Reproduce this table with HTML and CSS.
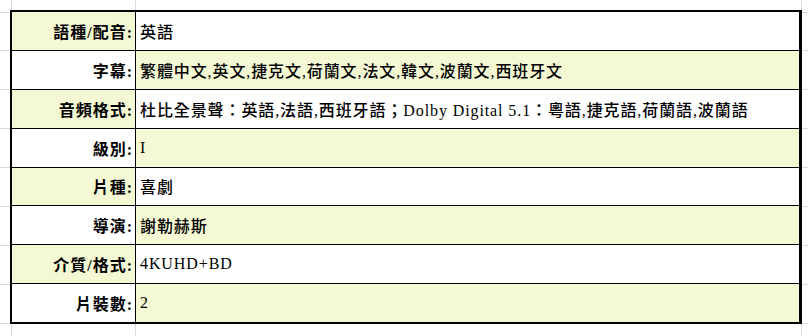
FILE: index.html
```html
<!DOCTYPE html>
<html lang="zh-Hant">
<head>
<meta charset="utf-8">
<title>規格</title>
<link rel="stylesheet" href="styles.css">
</head>
<body>
<div class="sheet">
  <div class="spec">
    <div class="lab hl">語種/配音:</div><div class="val">英語</div>
    <div class="lab">字幕:</div><div class="val hl">繁體中文,英文,捷克文,荷蘭文,法文,韓文,波蘭文,西班牙文</div>
    <div class="lab hl">音頻格式:</div><div class="val">杜比全景聲：英語,法語,西班牙語；Dolby Digital 5.1：粵語,捷克語,荷蘭語,波蘭語</div>
    <div class="lab">級別:</div><div class="val hl">I</div>
    <div class="lab hl">片種:</div><div class="val">喜劇</div>
    <div class="lab">導演:</div><div class="val hl">謝勒赫斯</div>
    <div class="lab hl">介質/格式:</div><div class="val">4KUHD+BD</div>
    <div class="lab">片裝數:</div><div class="val hl">2</div>
  </div>
</div>
</body>
</html>
```
FILE: styles.css
```css
html, body {
  margin: 0;
  padding: 0;
}
body {
  width: 808px;
  height: 336px;
  background-color: #fff;
  background-image:
    linear-gradient(to right, transparent 11px, #dadada 11px, #dadada 12px, transparent 12px),
    linear-gradient(to right, transparent 135px, #dadada 135px, #dadada 136px, transparent 136px),
    linear-gradient(to right, transparent 801px, #dadada 801px, #dadada 802px, transparent 802px),
    linear-gradient(to bottom, transparent 12px, #dadada 12px, #dadada 13px, transparent 13px),
    linear-gradient(to bottom, transparent 50px, #dadada 50px, #dadada 51px, transparent 51px),
    linear-gradient(to bottom, transparent 89px, #dadada 89px, #dadada 90px, transparent 90px),
    linear-gradient(to bottom, transparent 128px, #dadada 128px, #dadada 129px, transparent 129px),
    linear-gradient(to bottom, transparent 167px, #dadada 167px, #dadada 168px, transparent 168px),
    linear-gradient(to bottom, transparent 206px, #dadada 206px, #dadada 207px, transparent 207px),
    linear-gradient(to bottom, transparent 245px, #dadada 245px, #dadada 246px, transparent 246px),
    linear-gradient(to bottom, transparent 284px, #dadada 284px, #dadada 285px, transparent 285px),
    linear-gradient(to bottom, transparent 323px, #dadada 323px, #dadada 324px, transparent 324px);
}
.sheet {
  padding: 10px 6px 0 10px;
}
.spec {
  box-sizing: border-box;
  width: 792px;
  height: 314px;
  display: grid;
  grid-template-columns: 123px 1fr;
  grid-template-rows: repeat(8, 1fr);
  gap: 1px;
  background: #000;
  border: 2px solid #000;
  border-width: 2px 3px 2px 2px;
  font-family: "Liberation Serif", "Noto Sans CJK TC", serif;
  font-size: 16px;
  color: #000;
}
.lab, .val {
  background: #fff;
  display: flex;
  align-items: center;
  white-space: nowrap;
}
.lab {
  justify-content: flex-end;
  padding-right: 2px;
  font-weight: bold;
  letter-spacing: 1px;
}
.val {
  padding-left: 4px;
  font-weight: 500;
  letter-spacing: 0.9px;
}
.hl {
  background: #f4f9d3;
}
```
